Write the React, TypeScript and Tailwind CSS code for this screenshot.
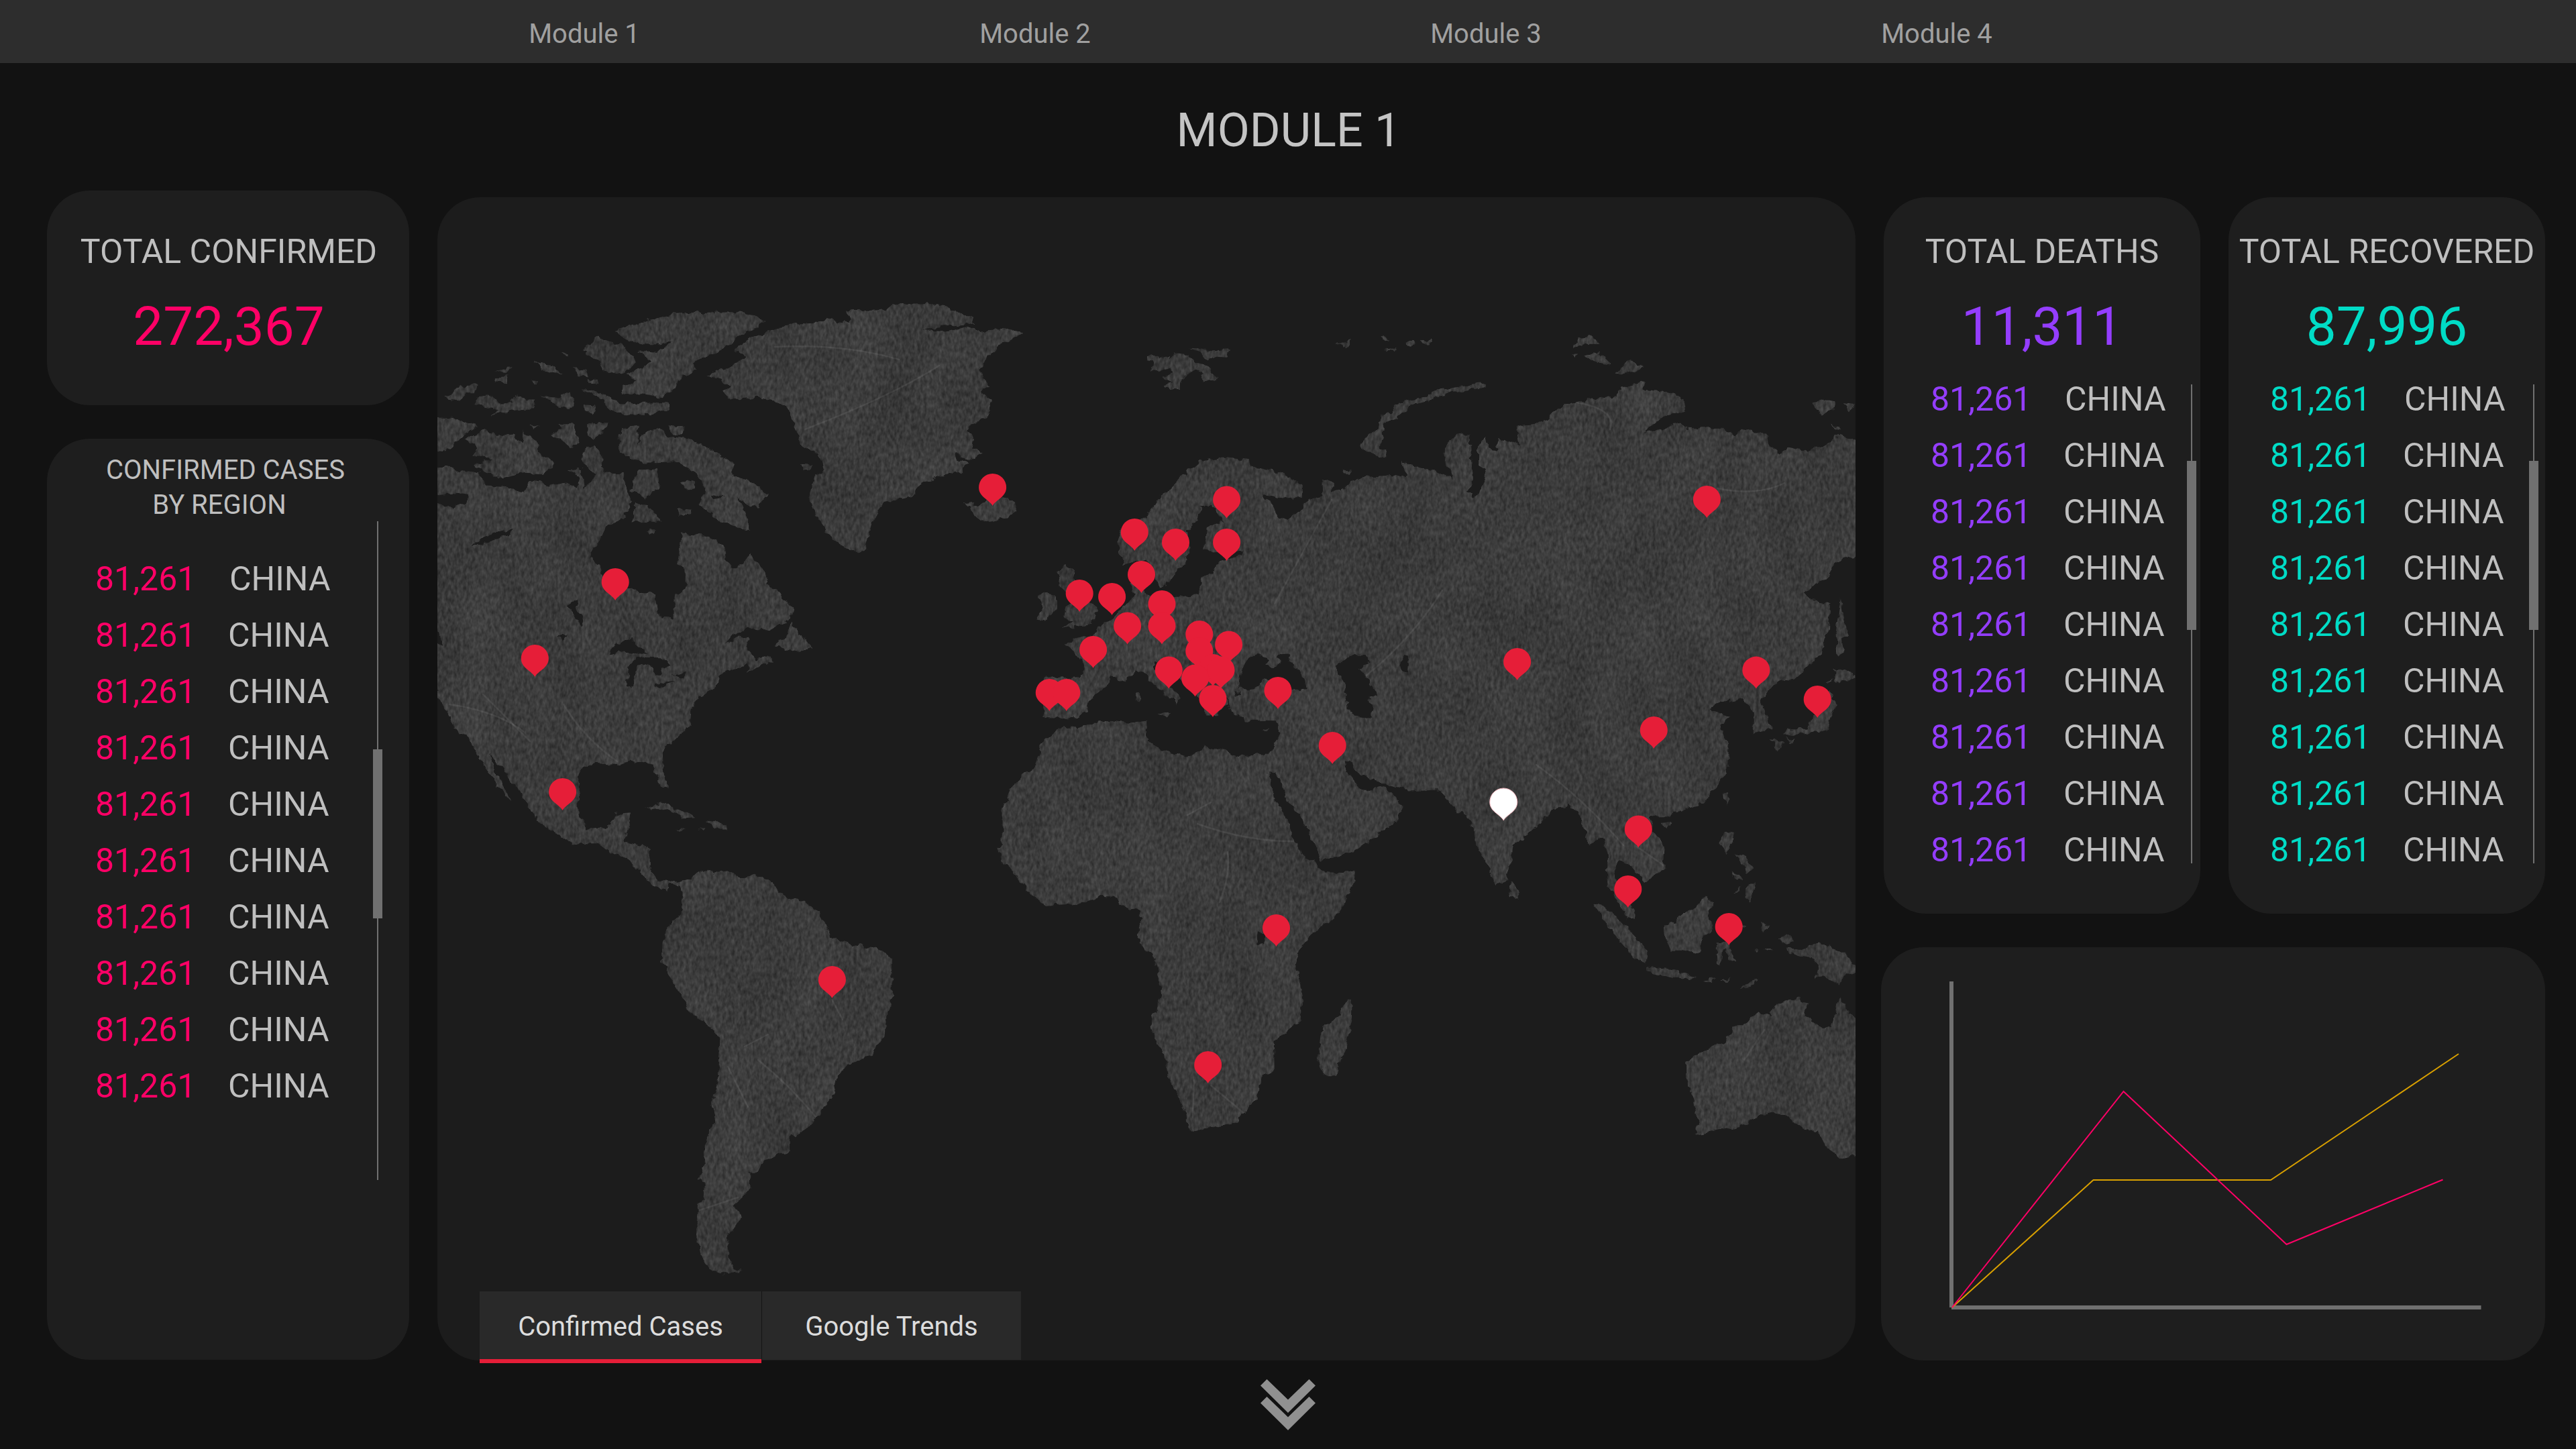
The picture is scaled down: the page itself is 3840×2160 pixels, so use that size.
import React from "react";

const MODULES = ["Module 1", "Module 2", "Module 3", "Module 4"];

type Sheet = { transform: string; shapes: string[] };

/* Land outlines, grouped by map sheet; each sheet has its own local scale. */
const LAND: Sheet[] = [
  {
    // North America, Arctic islands, Greenland, Iceland
    transform: "matrix(0.574 0 0 0.5102 640 400)",
    shapes: [
      "10,580 45,580 80,592 125,598 145,620 145,636 220,640 240,655 262,620 310,632 360,628 385,640 388,610 362,590 395,588 400,640 425,620 440,580 475,600 505,600 510,640 530,680 500,730 460,755 440,800 415,845 440,865 448,905 515,930 545,945 585,950 590,985 600,1020 635,1022 635,960 665,935 665,890 645,860 655,775 720,782 762,810 770,850 790,875 810,868 830,835 865,875 880,920 915,960 945,990 940,1020 890,1055 830,1055 790,1070 765,1102 800,1078 832,1075 825,1110 850,1142 885,1130 890,1148 825,1182 825,1158 755,1185 748,1220 700,1250 680,1290 678,1335 640,1375 605,1410 605,1455 618,1520 600,1510 580,1450 520,1438 420,1445 388,1475 385,1600 270,1600 235,1530 175,1440 155,1418 175,1480 212,1555 190,1530 130,1435 100,1370 70,1350 45,1290 21,1250 10,1200",
      "722,310 780,290 825,260 790,235 840,205 895,180 940,162 1010,160 1030,145 1060,155 1095,160 1085,122 1190,120 1200,105 1290,102 1340,110 1365,125 1415,145 1410,160 1280,180 1340,185 1400,170 1430,188 1490,175 1545,185 1480,225 1450,260 1430,300 1455,345 1430,360 1460,385 1450,430 1395,470 1415,500 1410,525 1435,540 1400,560 1370,540 1365,555 1400,570 1380,595 1330,605 1280,625 1250,665 1180,685 1150,740 1130,825 1115,830 1060,805 1030,765 995,700 985,660 1000,610 1022,590 1015,550 965,520 955,480 930,410 900,390 850,378 785,385 765,360 785,345 755,325",
      "478,180 590,145 650,130 800,128 845,135 872,155 845,175 800,200 780,225 685,275 690,300 650,320 640,350 605,375 560,368 500,365 500,345 540,330 510,312 550,290 575,270 545,240 590,245 635,210 600,222 555,222 510,205",
      "435,198 500,225 540,270 520,295 490,310 450,300 440,270 400,240",
      "392,355 440,360 475,385 500,395 620,392 622,415 575,428 490,425 460,410 455,385",
      "10,435 80,440 125,460 90,485 60,520 35,532 10,525",
      "90,500 150,470 170,490 215,485 240,515 245,475 280,510 290,540 330,570 300,600 250,598 190,612 150,600 115,575 165,555 110,548 125,525",
      "500,465 545,460 540,510 560,475 600,465 620,490 680,500 740,535 790,570 790,605 850,630 878,662 850,700 800,670 830,735 825,765 760,745 700,690 720,650 690,595 640,565 560,568 510,550 488,515",
      "310,485 345,470 335,455 380,455 380,480 390,515 365,522 340,500",
      "410,455 465,455 455,475 425,500 410,485",
      "400,530 425,515 450,545 445,590 430,600 400,570",
      "540,590 590,585 597,640 560,670 525,650",
      "535,685 575,700 605,740 525,742",
      "655,625 690,620 690,640 665,642",
      "645,702 682,705 675,720 650,724",
      "565,765 590,765 585,775 570,775",
      "965,575 995,575 990,588 970,588",
      "40,380 80,345 125,340 120,365 95,365 75,385",
      "115,400 125,375 160,370 180,395 215,395 225,365 245,385 272,385 270,412 220,415 160,430 180,412",
      "290,372 340,380 345,362 370,365 378,385 365,410 340,405",
      "275,270 320,285 348,312 300,300",
      "375,292 405,298 411,318 385,318",
      "172,318 207,316 200,334 175,330",
      "170,297 212,290 200,306",
      "400,402 432,405 428,424 405,418",
      "410,325 440,325 435,333 415,333",
      "345,243 360,245 360,256",
      "265,328 285,330 275,338",
      "615,458 660,465 655,487 630,484",
      "260,460 285,462 270,472",
      "940,1035 960,1065 995,1110 955,1125 900,1102 925,1075",
      "1388,682 1415,680 1410,700 1398,692",
      "1408,700 1440,680 1500,665 1525,705 1500,730 1450,742 1418,730",
    ],
  },
  {
    // Mexico, Caribbean, South America
    transform: "matrix(0.574 0 0 0.5421 640 1100)",
    shapes: [
      "100,0 640,0 605,30 608,80 618,140 600,130 578,72 520,60 490,72 425,68 390,90 385,200 410,250 465,248 485,208 525,205 518,240 505,285 575,302 572,365 595,392 650,398 680,385 715,360 740,370 770,365 810,382 865,378 900,410 930,440 975,448 1010,480 1045,548 1100,570 1170,580 1200,605 1202,715 1185,770 1185,810 1150,870 1085,900 1058,930 1050,980 990,1065 955,1092 935,1095 935,1135 870,1160 850,1195 832,1195 830,1240 790,1285 812,1318 775,1370 778,1430 790,1458 812,1465 765,1475 730,1460 705,1420 692,1360 695,1285 710,1275 712,1230 700,1215 715,1180 718,1110 742,1050 735,1000 750,950 755,830 740,805 680,755 605,620 605,570 620,520 658,480 655,410 620,402 615,420 580,405 545,365 515,335 455,305 435,290 370,290 280,228 275,190 235,140 175,60 155,40 175,100 212,175 190,150 130,60",
      "558,195 600,178 650,195 692,220 660,222 640,204 590,190",
      "720,228 755,232 775,250 740,250",
      "643,250 667,250 660,257",
      "698,248 717,248 712,255",
    ],
  },
  {
    // Europe and western Asia
    transform: "matrix(0.5102 0 0 0.4464 1400 620)",
    shapes: [
      "302,885 310,868 350,875 415,872 420,835 400,790 365,760 405,745 450,735 470,700 510,670 545,630 570,600 560,560 580,545 600,590 620,600 690,605 755,598 770,540 805,525 810,490 885,465 885,450 800,458 775,440 780,375 830,350 800,300 765,300 755,345 725,380 730,440 720,490 690,520 665,570 640,572 630,530 600,480 540,500 525,450 520,420 540,370 600,345 640,280 710,200 760,150 830,138 905,148 910,168 1000,190 1060,235 1060,270 1010,275 945,262 975,300 990,335 1020,345 1050,320 1080,280 1120,270 1118,212 1155,225 1145,250 1175,250 1230,205 1300,200 1370,200 1350,150 1400,170 1450,185 1500,210 1568,280 1568,1400 1540,1330 1510,1310 1470,1248 1390,1252 1330,1240 1280,1215 1240,1190 1215,1150 1185,1155 1190,1190 1240,1260 1300,1235 1350,1300 1345,1340 1270,1410 1200,1445 1120,1482 1090,1410 1050,1320 1010,1250 985,1190 960,1185 940,1180 930,1135 965,1132 995,1060 985,1020 890,1018 850,980 840,930 840,960 810,1000 780,1000 770,950 720,900 680,850 630,820 625,835 650,880 705,935 690,970 685,945 640,910 600,860 575,850 540,885 500,870 485,905 440,950 430,990 370,1020 345,1010 305,1008",
      "345,520 370,498 400,520 395,545 430,600 460,645 455,680 440,698 360,708 395,685 365,675 370,640 395,620 355,570",
      "290,605 300,590 345,595 345,640 310,682 285,678 300,640",
      "570,925 588,925 588,957 572,957",
      "635,988 672,990 668,1008",
      "940,1048 967,1043 955,1058",
    ],
  },
  {
    // Africa, Arabia
    transform: "matrix(0.4464 0 0 0.4464 1440 1050)",
    shapes: [
      "330,70 370,82 440,60 490,52 540,62 600,55 605,120 650,150 740,178 760,170 795,140 860,155 910,175 1005,165 1010,240 1030,320 1070,375 1100,460 1125,505 1160,525 1185,560 1260,562 1300,550 1295,600 1245,700 1150,770 1110,825 1100,880 1122,985 1120,1055 1040,1115 1028,1130 1030,1220 990,1245 965,1320 895,1400 765,1425 745,1422 735,1365 680,1250 665,1170 635,1130 620,1080 625,1040 640,1000 652,970 640,880 620,830 580,800 580,690 530,675 490,640 460,638 380,665 265,672 220,640 150,550 120,520 103,480 120,470 120,355 150,285 190,230 230,210 250,135 300,85",
      "1275,985 1292,990 1290,1050 1265,1150 1235,1235 1190,1235 1175,1190 1190,1080 1240,1045",
      "1020,210 1050,255 1075,320 1110,370 1150,440 1185,522 1290,492 1400,420 1452,360 1450,330 1400,275 1350,298 1300,270 1262,220 1262,190 1290,185 1320,225 1380,255 1430,270 1480,290 1568,285 1568,40 1040,50 1050,95 1020,165 990,165 1000,215",
    ],
  },
  {
    // Northern and central Asia
    transform: "matrix(0.5102 0 0 0.5102 2000 450)",
    shapes: [
      "0,545 60,512 120,518 195,505 175,465 230,482 290,505 325,515 298,460 300,430 335,385 375,385 380,490 385,530 350,570 385,570 410,545 425,490 400,475 400,425 418,395 425,425 450,435 460,400 520,420 512,362 585,355 640,305 740,282 800,275 820,250 880,235 885,255 960,262 1000,285 1005,315 940,335 880,380 920,375 980,352 1010,368 1100,370 1150,388 1170,372 1235,385 1250,415 1280,445 1305,425 1350,435 1410,420 1450,390 1530,410 1530,740 1480,745 1430,775 1410,810 1350,850 1370,872 1430,880 1420,960 1400,1030 1320,1105 1270,1110 1225,1165 1255,1245 1205,1260 1205,1200 1170,1160 1135,1172 1135,1155 1075,1190 1135,1215 1100,1245 1130,1300 1130,1360 1060,1460 950,1500 900,1500 870,1568 715,1568 700,1500 665,1470 600,1490 525,1568 390,1568 380,1490 340,1490 280,1422 200,1425 100,1400 40,1370 20,1340 0,1300",
      "680,135 690,105 735,97 752,125 715,125",
      "708,160 750,145 790,184 750,178",
      "800,212 815,190 840,172 882,192 840,208",
      "1376,290 1410,283 1447,290 1440,312 1400,332",
      "1465,296 1498,300 1480,320",
      "1428,360 1460,365 1445,372",
      "672,152 692,152 685,162",
      "1458,865 1468,940 1480,975 1462,985 1465,1030 1449,1030 1445,960",
      "1440,1070 1500,1085 1500,1100 1450,1115 1438,1095",
      "1415,1110 1438,1100 1425,1115",
      "1430,1135 1440,1180 1422,1250 1360,1264 1290,1267 1300,1248 1355,1246 1380,1210",
      "1256,1275 1290,1287 1275,1310",
      "1300,1275 1325,1272 1310,1290",
      "1115,1443 1132,1438 1125,1470",
    ],
  },
  {
    // South-east Asia, Australia
    transform: "matrix(0.4464 0 0 0.4783 2100 1050)",
    shapes: [
      "0,268 100,262 155,320 195,345 210,325 225,440 260,500 290,560 330,545 350,435 380,420 480,330 545,312 590,370 600,440 645,410 665,450 660,520 665,570 700,620 730,670 760,668 740,620 700,580 685,520 700,480 750,510 790,555 850,510 855,445 820,395 800,350 900,335 990,305 1060,210 1065,130 1040,70 0,60",
      "846,372 877,368 860,392",
      "340,550 370,585 362,610 342,597",
      "613,620 650,626 700,668 760,728 797,770 792,804 750,792 700,732",
      "793,818 900,830 962,856 880,852 793,834",
      "853,685 895,680 900,660 950,640 990,597 1017,620 1000,650 1015,700 985,730 965,777 920,767 875,767 855,720",
      "1028,740 1065,740 1092,802 1070,797 1062,762 1045,777 1040,808 1028,808",
      "1100,690 1130,695 1110,704",
      "1058,393 1087,400 1064,467 1038,435",
      "1088,463 1120,470 1150,510 1130,527 1113,495",
      "1083,523 1114,548 1095,550",
      "1083,587 1110,563 1100,582",
      "1128,573 1150,548 1154,580 1140,617 1126,600",
      "1178,670 1197,690 1185,712",
      "1265,758 1310,765 1365,740 1440,765 1510,830 1455,845 1435,875 1390,850 1360,850 1370,820 1335,787 1270,777",
      "1233,730 1260,716 1290,738 1250,747",
      "1108,887 1140,863 1167,856 1140,882",
      "988,861 1024,853 1010,867",
      "1038,858 1077,853 1060,866",
      "1190,763 1222,766 1200,773",
      "1150,766 1168,766 1160,771",
      "1285,915 1335,930 1320,970 1370,1000 1410,1010 1425,960 1440,912 1470,965 1530,1000 1530,1400 1440,1412 1400,1385 1365,1330 1320,1325 1270,1285 1200,1272 1150,1290 1110,1315 960,1342 955,1320 968,1310 950,1230 930,1160 930,1110 1000,1075 1050,1055 1080,1020 1085,1000 1120,1000 1165,955 1205,970 1225,935",
    ],
  },
  {
    // Svalbard, Franz Josef Land, Novaya Zemlya
    transform: "matrix(0.3333 0 0 0.3333 1680 480)",
    shapes: [
      "88,150 140,146 150,160 185,152 195,168 212,145 270,150 300,178 345,185 395,235 413,248 395,266 338,264 340,235 315,212 285,222 240,268 240,303 190,303 165,280 200,270 160,246 205,225 200,202 140,220 108,215 115,185 88,172",
      "273,115 320,112 345,128 462,124 448,158 400,155 365,172 340,160 318,130",
      "940,96 1008,84 978,118",
      "1150,124 1208,110 1200,130",
      "1135,68 1150,60 1172,86 1155,82",
      "1243,90 1268,82 1292,96 1260,102",
      "1308,84 1345,84 1368,68 1355,97 1320,99",
      "1440,297 1390,308 1330,335 1245,353 1210,372 1175,408 1140,412 1130,455 1110,485 1085,500 1050,540 1055,572 1090,575 1112,602 1155,604 1162,580 1130,560 1140,520 1140,490 1155,455 1205,430 1240,400 1280,368 1345,355 1390,330 1470,315 1610,290 1610,270",
      "968,658 1003,662 1000,680 975,680",
    ],
  },
];

const WATER: Sheet[] = [
  {
    transform: "matrix(0.574 0 0 0.5102 640 400)",
    shapes: [
      "105,812 150,780 215,760 205,780 150,802",
      "358,985 382,966 385,1000 402,1025 396,1048 375,1015",
      "462,1130 480,1103 520,1078 568,1127 510,1117",
      "513,1222 518,1160 540,1136 610,1138 627,1160 605,1167 595,1190 565,1155 540,1162 530,1220",
      "630,1185 667,1178 660,1197",
      "583,1218 637,1203 600,1227",
      "10,665 60,658 102,665 95,687 60,700 10,682",
      "733,660 767,668 740,674",
      "21,1050 37,1105 10,1100",
      "333,1070 357,1073 345,1092",
    ],
  },
  {
    transform: "matrix(0.5102 0 0 0.4464 1400 620)",
    shapes: [
      "875,905 880,850 900,815 930,795 965,815 955,830 975,840 998,825 985,800 1028,795 1020,820 1060,860 1075,910 1030,915 990,890 955,880 935,900 900,915",
      "1160,835 1200,800 1250,795 1260,825 1225,840 1250,880 1280,935 1255,945 1272,970 1260,1005 1210,1000 1195,975 1185,900",
      "1345,830 1357,800 1372,805 1368,855 1352,850",
      "860,924 886,924 880,934 862,936",
    ],
  },
  {
    transform: "matrix(0.4464 0 0 0.4464 1440 1050)",
    shapes: ["968,802 975,760 1002,762 1002,800"],
  },
];

/* Faint surface scratches across the continents. */
const SCRATCHES = [
  "M1155 517 Q1260 512 1340 536",
  "M1200 640 Q1330 590 1400 545",
  "M670 1050 Q740 1060 780 1090",
  "M840 1050 Q870 1100 920 1135",
  "M720 1035 L790 1105",
  "M1785 1228 Q1860 1255 1930 1254",
  "M1770 1215 L1805 1196",
  "M1780 1610 L1778 1665",
  "M1805 1618 L1855 1660",
  "M1818 1345 Q1835 1300 1830 1270",
  "M2290 1140 Q2360 1190 2420 1260",
  "M2440 1262 L2480 1290",
  "M2350 600 Q2410 610 2400 640",
  "M2560 728 Q2620 740 2660 720",
  "M1110 1560 L1145 1542",
  "M1130 1580 Q1180 1620 1220 1670",
  "M1240 1490 L1256 1520",
  "M1085 1590 L1115 1650",
  "M1040 1805 L1100 1785",
  "M2600 1580 L2630 1535",
  "M2020 1020 Q2100 960 2150 880",
  "M1985 745 L1900 900",
];

/* Centre x and top y of every marker on the map. */
const PINS: [number, number][] = [
  [1479.6, 706], [1828.6, 724.5], [1691.3, 773], [1752.5, 788], [1828.6, 788],
  [1701.5, 836], [1609.2, 864], [1657.6, 869], [1732, 880], [1680.6, 912.5],
  [1732, 912.5], [1787.8, 925], [1831.6, 940.5], [1629.6, 948], [1787.8, 950],
  [1742.3, 978.5], [1808, 975], [1820, 978.5], [1781.6, 990.5], [1564.3, 1012],
  [1589.8, 1012], [1905, 1009], [1986.2, 1091], [917.2, 847], [797.3, 961],
  [838.6, 1160], [1240.4, 1440], [1902.5, 1363], [1800.7, 1567], [2544.4, 724],
  [2261.7, 966], [2617.8, 978.6], [2709.2, 1022], [2465.3, 1068], [2442.3, 1215.5],
  [2426.8, 1305], [2577.2, 1361],
];

const PIN_PATH =
  "M0 48 C-2 44 -7 40.500 -13 35.500 C-18 31 -20.500 26.500 -20.500 20.500 A20.500 20.500 0 0 1 20.500 20.500 C20.500 26.500 18 31 13 35.500 C7 40.500 2 44 0 48 Z";

function Shapes({ sheets, fill }: { sheets: Sheet[]; fill: string }) {
  return (
    <>
      {sheets.map((sheet, i) => (
        <g key={i} transform={sheet.transform} fill={fill}>
          {sheet.shapes.map((points, j) => (
            <polygon key={j} points={points} />
          ))}
        </g>
      ))}
    </>
  );
}

function Pin({ x, y, fill, stroke }: { x: number; y: number; fill: string; stroke?: string }) {
  return <path d={PIN_PATH} transform={`translate(${x} ${y})`} fill={fill} stroke={stroke ?? "none"} strokeWidth={1} />;
}

function WorldMap() {
  return (
    <svg className="block h-full w-full" viewBox="652 294 2114 1734">
      <defs>
        <filter id="coast" filterUnits="userSpaceOnUse" x="640" y="294" width="2140" height="1734">
          <feTurbulence type="fractalNoise" baseFrequency="0.09" numOctaves="2" seed="4" result="n" />
          <feDisplacementMap in="SourceGraphic" in2="n" scale="11" xChannelSelector="R" yChannelSelector="G" />
        </filter>
        <filter
          id="grain"
          filterUnits="userSpaceOnUse"
          x="640"
          y="294"
          width="2140"
          height="1734"
          colorInterpolationFilters="sRGB"
        >
          <feTurbulence type="fractalNoise" baseFrequency="0.22 0.12" numOctaves="2" seed="9" result="fine" />
          <feColorMatrix
            in="fine"
            type="matrix"
            values="0.36 0 0 0 0.045  0.36 0 0 0 0.045  0.36 0 0 0 0.045  0 0 0 0 1"
            result="fineGray"
          />
          <feTurbulence type="fractalNoise" baseFrequency="0.016 0.009" numOctaves="4" seed="21" result="wide" />
          <feColorMatrix
            in="wide"
            type="matrix"
            values="0.13 0 0 0 0.165  0.13 0 0 0 0.165  0.13 0 0 0 0.165  0 0 0 0 1"
            result="wideGray"
          />
          <feComposite in="fineGray" in2="wideGray" operator="arithmetic" k1="0" k2="0.5" k3="0.5" k4="0.006" />
        </filter>
        <mask id="land" maskUnits="userSpaceOnUse" x="640" y="294" width="2140" height="1734">
          <g filter="url(#coast)">
            <Shapes sheets={LAND} fill="#ffffff" />
            <Shapes sheets={WATER} fill="#000000" />
          </g>
        </mask>
      </defs>
      <g mask="url(#land)">
        <rect x="652" y="294" width="2114" height="1734" filter="url(#grain)" />
        {SCRATCHES.map((d) => (
          <path key={d} d={d} fill="none" stroke="#ffffff" strokeOpacity={0.07} strokeWidth={2.5} strokeLinecap="round" />
        ))}
      </g>
      {PINS.map(([x, y], i) => (
        <Pin key={i} x={x} y={y} fill="#e61e38" />
      ))}
      {/* thin seam above the southernmost Balkan marker */}
      <path d="M1787.500 1039 A21.500 21.500 0 0 1 1829 1039" fill="none" stroke="#3a3a3a" strokeWidth={1.5} />
      <Pin x={1808} y={1021} fill="#e61e38" />
      <Pin x={2241.3} y={1175} fill="#ffffff" stroke="#f3b4bc" />
    </svg>
  );
}

function Scrollbar({ className, thumb }: { className: string; thumb: string }) {
  return (
    <div className={`flex w-3.5 flex-col items-center ${className}`}>
      <div className={`w-0.5 bg-[#707070] ${thumb}`} />
      <div className="h-[252px] w-3.5 shrink-0 bg-[#707070]" />
      <div className="w-0.5 flex-1 bg-[#707070]" />
    </div>
  );
}

function Rows({ count, color, className }: { count: number; color: string; className: string }) {
  return (
    <ul className={`flex flex-col ${className}`}>
      {Array.from({ length: count }, (_, i) => (
        <li key={i} className={`flex h-[84px] items-center leading-[84px] ${i === 0 ? "gap-[50px]" : "gap-12"}`}>
          <span className={`w-[150px] ${color}`}>81,261</span>
          <span>CHINA</span>
        </li>
      ))}
    </ul>
  );
}

function TotalColumn({
  title,
  total,
  color,
  rows,
}: {
  title: string;
  total: string;
  color: string;
  rows: string;
}) {
  return (
    <section className="flex h-[1068px] w-[472px] flex-col rounded-[64px] bg-[#1e1e1e] text-[50px]">
      <h2 className="mt-[51px] h-[60px] text-center leading-[60px] whitespace-nowrap">{title}</h2>
      <p className={`mt-8 h-[100px] text-center text-[80px] leading-[100px] ${color}`}>{total}</p>
      <div className="mt-4 flex">
        <Rows count={9} color={color} className={rows} />
        <Scrollbar className="mt-5 h-[714px]" thumb="h-[114px]" />
      </div>
    </section>
  );
}

export default function App() {
  return (
    <div className="flex h-[2160px] w-[3840px] flex-col overflow-hidden bg-[#121212] font-['Roboto',sans-serif] text-[#bfbfbf]">
      <nav className="flex h-[94px] shrink-0 justify-center bg-[#2d2d2d] pr-[82px] text-[40px] leading-[102px] text-[#a0a0a0]">
        {MODULES.map((name) => (
          <a key={name} className="w-[672px] text-center">
            {name}
          </a>
        ))}
      </nav>
      <h1 className="h-[190px] shrink-0 pl-0.5 text-center text-[70px] leading-[201px] text-[#c4c4c4]">MODULE 1</h1>

      <main className="flex h-[1748px] shrink-0 pl-[70px]">
        <div className="flex w-[540px] shrink-0 flex-col">
          <section className="flex h-80 flex-col rounded-[64px] bg-[#1e1e1e] pl-0.5 text-center">
            <h2 className="mt-[61px] h-[60px] text-[50px] leading-[60px]">TOTAL CONFIRMED</h2>
            <p className="mt-8 h-[100px] text-[80px] leading-[100px] text-[#ff0066]">272,367</p>
          </section>
          <section className="mt-[50px] flex h-[1373px] flex-col rounded-[64px] bg-[#1e1e1e]">
            <h2 className="mt-[21px] text-center text-[40px] leading-[52px]">
              <span className="block pr-2">CONFIRMED CASES</span>
              <span className="block pr-[26px]">BY REGION</span>
            </h2>
            <div className="flex text-[50px]">
              <Rows count={10} color="text-[#ff0066]" className="mt-[42px] ml-[72px] w-[414px]" />
              <Scrollbar className="-mt-0.5 h-[982px]" thumb="h-[340px]" />
            </div>
          </section>
        </div>

        <section className="relative mt-2.5 ml-[42px] h-[1734px] w-[2114px] shrink-0">
          <div className="h-full overflow-hidden rounded-[64px] bg-[#1c1c1c]">
            <WorldMap />
          </div>
          <div className="absolute top-[1631px] left-[63px] flex text-[40px] leading-[106px] text-[#dcdcdc]">
            <button className="box-content h-[101px] w-[420px] border-b-[6px] border-[#e61e38] bg-[#292929] text-center">
              Confirmed Cases
            </button>
            <button className="h-[102px] w-[387px] border-l border-[#151515] bg-[#292929] text-center">
              Google Trends
            </button>
          </div>
        </section>

        <div className="mt-2.5 ml-[38px] flex w-[990px] shrink-0 flex-col">
          <div className="flex justify-between pl-1">
            <TotalColumn title="TOTAL DEATHS" total="11,311" color="text-[#943dff]" rows="ml-[70px] w-[382px]" />
            <TotalColumn title="TOTAL RECOVERED" total="87,996" color="text-[#00dcc6]" rows="ml-[62px] w-[386px]" />
          </div>
          <section className="mt-[50px] h-[616px] rounded-[64px] bg-[#1e1e1e]">
            <svg className="block h-full w-full" viewBox="2804 1412 990 616" fill="none">
              <path d="M2909 1463V1949" stroke="#707070" strokeWidth={6} />
              <path d="M2909 1949H3698.500" stroke="#707070" strokeWidth={6} />
              <path d="M2910 1949L3120.500 1759H3385L3665 1571" stroke="#d9a000" strokeWidth={2} />
              <path d="M2910 1949L3165.500 1627L3408.500 1855L3641.500 1758.500" stroke="#ff0066" strokeWidth={2} />
            </svg>
          </section>
        </div>
      </main>

      <footer className="flex justify-center pt-6">
        <svg className="h-[76px] w-[82px]" viewBox="0 0 82 76" fill="#909090">
          <path d="M9.500 0L41 30.500L72.500 0L82 9.500L41 50L0 9.500Z" />
          <path d="M9.500 26L41 56.500L72.500 26L82 35.500L41 76L0 35.500Z" />
        </svg>
      </footer>
    </div>
  );
}
